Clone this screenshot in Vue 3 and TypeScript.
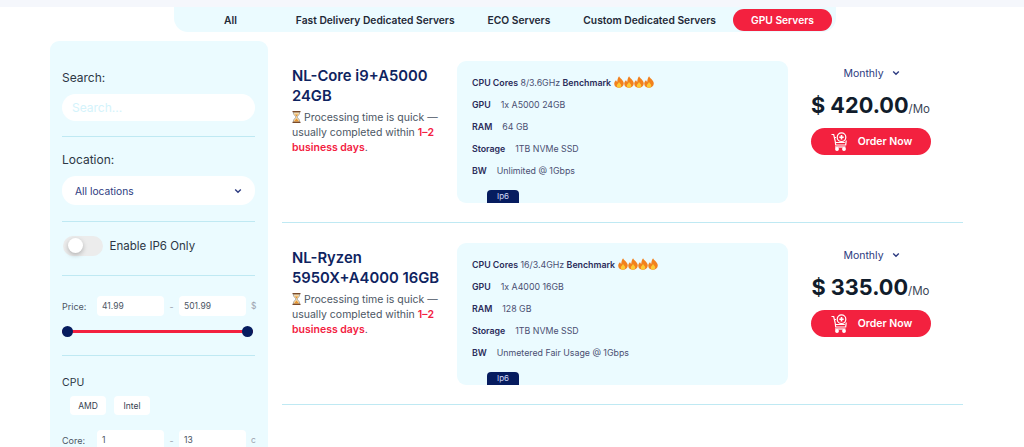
<script setup lang="ts">
interface Server {
  title: string[];
  cores: string;
  gpu: string;
  ram: string;
  storage: string;
  bw: string;
  price: string;
}
const tabs = ['All', 'Fast Delivery Dedicated Servers', 'ECO Servers', 'Custom Dedicated Servers'];
const servers: Server[] = [
  { title: ['NL-Core i9+A5000', '24GB'], cores: '8/3.6GHz', gpu: '1x A5000 24GB', ram: '64 GB', storage: '1TB NVMe SSD', bw: 'Unlimited @ 1Gbps', price: '420.00' },
  { title: ['NL-Ryzen', '5950X+A4000 16GB'], cores: '16/3.4GHz', gpu: '1x A4000 16GB', ram: '128 GB', storage: '1TB NVMe SSD', bw: 'Unmetered Fair Usage @ 1Gbps', price: '335.00' },
];
</script>

<template>
  <div class="page">
    <div class="strip"></div>
    <nav class="tabs">
      <span v-for="(t, i) in tabs" :key="t" class="tab" :class="'tab' + i">{{ t }}</span>
      <span class="tab active">GPU Servers</span>
    </nav>
    <div class="body">
      <aside class="side">
        <section class="block b-search">
          <label class="lab">Search:</label>
          <div class="pill ph">Search...</div>
        </section>
        <section class="block b-loc">
          <label class="lab">Location:</label>
          <div class="pill sel">
            <span>All locations</span>
            <svg width="8" height="6" viewBox="0 0 8 6"><path d="M1.2 1.5 4 4.2 6.8 1.5" fill="none" stroke="#2c3a80" stroke-width="1.4"/></svg>
          </div>
        </section>
        <section class="block b-tog">
          <span class="toggle"><span class="knob"></span></span>
          <span class="lab tog-lab">Enable IP6 Only</span>
        </section>
        <section class="block b-price">
          <div class="range">
            <span class="rl">Price:</span>
            <span class="box">41.99</span>
            <span class="dash">-</span>
            <span class="box">501.99</span>
            <span class="unit">$</span>
          </div>
          <div class="slider"><i class="dot"></i><i class="dot"></i></div>
        </section>
        <section class="b-cpu">
          <div class="lab cpu">CPU</div>
          <div class="chips"><span class="chip">AMD</span><span class="chip">Intel</span></div>
          <div class="range">
            <span class="rl">Core:</span>
            <span class="box">1</span>
            <span class="dash">-</span>
            <span class="box">13</span>
            <span class="unit">c</span>
          </div>
        </section>
      </aside>
      <main class="list">
        <article v-for="s in servers" :key="s.price" class="row">
          <div class="info">
            <h2 class="title"><span v-for="l in s.title" :key="l" class="tl">{{ l }}</span></h2>
            <p class="note">
              <svg class="hg" width="9" height="12" viewBox="0 0 9 12"><path d="M1.5 1h6v2L5 6l2.500 3v2h-6V9L4 6 1.500 3z" fill="#f5d9a8" stroke="#9a9a9a" stroke-width=".7"/><path d="M2 10.500h5L4.500 7.500zM3 3.500h3L4.500 5.500z" fill="#e9952f"/><path d="M.5.600h8M.5 11.400h8" stroke="#7a4a2a" stroke-width="1.200"/></svg>
              Processing time is quick —<br />usually completed within <b class="red">1–2</b><br /><b class="red">business days</b>.
            </p>
          </div>
          <div class="spec">
            <div class="line"><b>CPU Cores</b> {{ s.cores }} <b>Benchmark</b>
              <span class="fires">
                <svg v-for="n in 4" :key="n" width="10" height="12" viewBox="0 0 9 12" preserveAspectRatio="none"><path d="M4.600.3C5 2.400 8.800 4 8.800 7.600 8.800 10.200 6.800 11.800 4.500 11.800S.2 10.200.2 7.700C.2 5.900 1.200 4.800 1.900 4c.1 1 .5 1.600 1.100 1.800C3 4 3.300 1.800 4.600.3z" fill="#f2811d"/><path d="M4.500 6C5 7.200 6.500 8 6.500 9.600 6.500 10.900 5.600 11.700 4.500 11.700S2.500 10.900 2.500 9.700C2.500 8.300 4 7.500 4.500 6z" fill="#fcc934"/></svg>
              </span>
            </div>
            <div class="line"><b>GPU</b><span class="val">{{ s.gpu }}</span></div>
            <div class="line"><b>RAM</b><span class="val">{{ s.ram }}</span></div>
            <div class="line"><b>Storage</b><span class="val">{{ s.storage }}</span></div>
            <div class="line"><b>BW</b><span class="val">{{ s.bw }}</span></div>
            <span class="tag">Ip6</span>
          </div>
          <div class="buy">
            <div class="cycle">
              <span>Monthly</span>
              <svg width="8" height="6" viewBox="0 0 8 6"><path d="M1.200 1.500 4 4.200 6.800 1.500" fill="none" stroke="#2c3a80" stroke-width="1.400"/></svg>
            </div>
            <div class="price"><b>$ {{ s.price }}</b><span>/Mo</span></div>
            <button class="order">
              <svg width="18" height="19" viewBox="0 0 18 19" fill="none" stroke="#fff" stroke-width="1.200">
                <path d="M.5 2.500h2.200l1.500 6.500 .5 4h10l.5-4.500" />
                <path d="M3.300 5.500H5M4.300 10.500h9.500" />
                <circle cx="10.500" cy="5.200" r="4.300" />
                <path d="M10.500 3v4.400M8.300 5.200h4.400" stroke-width="1.600" />
                <path d="M4 15h10.500" />
                <circle cx="6" cy="17" r="1.300" fill="#fff" />
                <circle cx="13" cy="17" r="1.300" fill="#fff" />
              </svg>
              <span>Order Now</span>
            </button>
          </div>
        </article>
      </main>
    </div>
  </div>
</template>

<style scoped>
.page {
  width: 1024px;
  height: 447px;
  overflow: hidden;
  background: #fff;
  font-family: Inter, "Noto Sans", sans-serif;
  color: #222b3a;
}
.strip { height: 7px; background: #f5f7fc; }
.tabs {
  width: 662px;
  height: 25px;
  margin: 0 0 0 174px;
  box-sizing: border-box;
  background: #ebfbff;
  border-radius: 0 0 14px 14px;
  display: flex;
  align-items: center;
  font-size: 10.250px;
  font-weight: 600;
  color: #1f2937;
  white-space: nowrap;
}
.tab { flex: none; }
.tab0 { margin-left: 50px; }
.tab1 { margin-left: 59px; }
.tab2 { margin-left: 33px; }
.tab3 { margin-left: 33px; }
.active {
  margin-left: 17px;
  width: 99px;
  height: 22px;
  border-radius: 11px;
  background: #f3213f;
  color: #fff;
  display: flex;
  align-items: center;
  justify-content: center;
}
.body { display: flex; margin: 9px 0 0 50px; gap: 14px; align-items: flex-start; }
.side {
  width: 218px;
  height: 420px;
  flex: none;
  box-sizing: border-box;
  padding: 0 13px 0 12px;
  background: #ebfbff;
  border-radius: 9px 9px 0 0;
  font-size: 12px;
}
.block { border-bottom: 1px solid #bfe9f3; }
.lab { display: block; font-size: 12px; color: #2d3745; line-height: 16px; }
.b-search { padding-top: 29px; height: 96px; box-sizing: border-box; }
.b-search .lab { margin-bottom: 8px; }
.pill {
  height: 27px;
  border-radius: 14px;
  background: #fff;
  display: flex;
  align-items: center;
  box-sizing: border-box;
}
.ph { padding-left: 10px; color: #d4f3fb; font-size: 12px; }
.b-loc { padding-top: 15px; height: 85px; box-sizing: border-box; }
.b-loc .lab { margin-bottom: 8px; }
.sel {
  height: 29px;
  padding: 0 13px;
  justify-content: space-between;
  font-size: 10.250px;
  color: #2c3a80;
  font-weight: 400;
}
.b-tog {
  height: 54px;
  box-sizing: border-box;
  display: flex;
  align-items: center;
  padding: 0 0 6px 0.500px;
}
.toggle {
  width: 40px;
  height: 20px;
  border-radius: 10px;
  background: #ececec;
  position: relative;
  flex: none;
}
.knob {
  position: absolute;
  left: 5px;
  top: 2px;
  width: 15px;
  height: 15px;
  border-radius: 50%;
  background: #fff;
  box-shadow: 0 2px 5px rgba(0, 0, 0, 0.25);
}
.tog-lab { margin-left: 7px; font-size: 11.500px; }
.b-price { height: 80px; box-sizing: border-box; padding-top: 20px; }
.range { display: flex; align-items: center; height: 20px; font-size: 9px; color: #4b5563; }
.rl { width: 35px; flex: none; }
.box {
  width: 67px;
  height: 20px;
  border-radius: 4px;
  background: #fff;
  padding-left: 5px;
  box-sizing: border-box;
  line-height: 20px;
  font-size: 8.500px;
  flex: none;
}
.dash { width: 15px; text-align: center; color: #9ca3af; flex: none; }
.unit { margin-left: 5px; color: #9ca3af; font-size: 8.500px; }
.slider {
  margin-top: 9px;
  width: 191px;
  height: 12px;
  display: flex;
  justify-content: space-between;
  align-items: center;
  background: linear-gradient(#f3213f, #f3213f) center / 100% 3px no-repeat;
}
.dot { width: 11px; height: 11px; border-radius: 50%; background: #061c5f; }
.b-cpu { padding-top: 19px; }
.cpu { font-size: 10.500px; }
.chips { display: flex; gap: 8px; margin: 5px 0 15px 8px; }
.chip {
  width: 36px;
  height: 19px;
  background: #fff;
  border-radius: 4px;
  font-size: 8.500px;
  color: #374151;
  display: flex;
  align-items: center;
  justify-content: center;
}
.list { width: 681px; flex: none; }
.row {
  height: 182px;
  box-sizing: border-box;
  padding: 20px 0 0 10px;
  display: flex;
  border-bottom: 1px solid #bfe9f3;
}
.info { width: 165px; flex: none; }
.title {
  margin: 5px 0 4px;
  font-size: 14.800px;
  line-height: 20px;
  font-weight: 600;
  color: #0e2360;
}
.tl { display: block; white-space: nowrap; }
.note {
  margin: 0;
  font-size: 10.500px;
  line-height: 15px;
  color: #4b5563;
  white-space: nowrap;
}
.hg { vertical-align: -2px; }
.red { color: #f3213f; font-weight: 600; }
.spec {
  width: 331px;
  height: 142px;
  flex: none;
  box-sizing: border-box;
  background: #ebfbff;
  border-radius: 9px;
  padding: 11px 0 0 15px;
  position: relative;
  font-size: 8.800px;
  color: #4a4f72;
}
.spec b { font-weight: 600; color: #2a2c5a; }
.line { height: 22px; line-height: 22px; white-space: nowrap; }
.val { margin-left: 10px; }
.fires { display: inline-flex; margin-left: 3px; vertical-align: -2px; }
.tag {
  position: absolute;
  left: 30px;
  bottom: 0;
  width: 32px;
  height: 13px;
  background: #061c5f;
  color: #cfd6f5;
  border-radius: 4px 4px 0 0;
  font-size: 8px;
  line-height: 13px;
  text-align: center;
}
.buy { flex: none; width: 165px; display: flex; flex-direction: column; align-items: center; }
.cycle {
  display: flex;
  align-items: center;
  gap: 8px;
  font-size: 10.500px;
  color: #2c3a80;
  margin-left: 2px;
  height: 24px;
}
.price { margin-top: 6px; height: 28px; display: flex; align-items: flex-end; color: #111c2b; white-space: nowrap; }
.price b { font-size: 21.700px; font-weight: 700; line-height: 28px; }
.price span { font-size: 11.500px; color: #3a4556; margin-bottom: 3px; }
.order {
  margin-top: 9px;
  width: 120px;
  height: 27px;
  border: 0;
  border-radius: 14px;
  background: #f3213f;
  color: #fff;
  font: 600 10.500px Inter, "Noto Sans", sans-serif;
  display: flex;
  align-items: center;
  justify-content: center;
  gap: 9px;
  padding: 0 0 0 2px;
}
</style>

<style>
html, body { margin: 0; background: #fff; }
</style>
